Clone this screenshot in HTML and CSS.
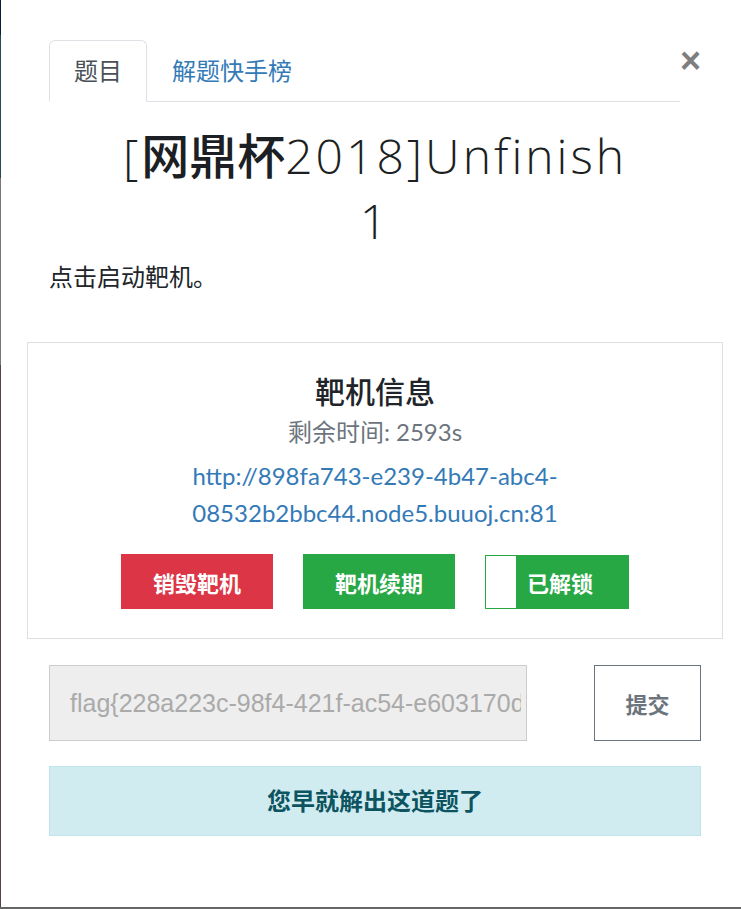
FILE: index.html
```html
<!DOCTYPE html>
<html lang="zh-CN">
<head>
    <meta charset="UTF-8">
    <meta name="viewport" content="width=device-width, initial-scale=1.0">
    <title>[网鼎杯2018]Unfinish 1</title>
    <link rel="stylesheet" href="styles.css">
</head>
<body>
    <div class="modal">
        <div class="modal-head">
            <ul class="tabs">
                <li class="tab active">题目</li>
                <li class="tab"><a href="#">解题快手榜</a></li>
            </ul>
            <button type="button" class="close">&times;</button>
        </div>

        <h1 class="title">[<span class="cjk">网鼎杯</span>2018]Unfinish 1</h1>
        <p class="desc">点击启动靶机。</p>

        <div class="box">
            <h4>靶机信息</h4>
            <p class="timer">剩余时间: 2593s</p>
            <a class="url" href="#">http://898fa743-e239-4b47-abc4-08532b2bbc44.node5.buuoj.cn:81</a>
            <div class="actions">
                <button type="button" class="btn btn-red">销毁靶机</button>
                <button type="button" class="btn btn-green">靶机续期</button>
                <button type="button" class="btn btn-unlock"><span class="knob"></span>已解锁</button>
            </div>
        </div>

        <form class="flag-row" onsubmit="return false">
            <input type="text" class="flag" value="flag{228a223c-98f4-421f-ac54-e603170d7f1b}" readonly>
            <button type="submit" class="submit">提交</button>
        </form>

        <div class="alert">您早就解出这道题了</div>
    </div>
</body>
</html>
```

FILE: styles.css
```css
html, body {
    margin: 0;
    height: 100%;
}
body {
    font-family: Lato, "Noto Sans CJK SC", sans-serif;
    font-size: 24px;
    line-height: 1.5;
    color: #212529;
    background: linear-gradient(to bottom, #0d1b36 0 35px, #24495b 35px 178px, #777 178px 365px, #5c3f4c 365px 907px, #666 907px);
    overflow: hidden;
}
.modal {
    margin-left: 1px;
    height: 907px;
    background-color: #fff;
    padding: 40px 40px 0 48px;
    box-sizing: border-box;
}
.modal-head {
    display: flex;
    align-items: flex-start;
}
.tabs {
    flex: 1;
    display: flex;
    list-style: none;
    margin: 0;
    padding: 0;
    border-bottom: 1px solid #dee2e6;
}
.tab {
    padding: 12px 24px;
    border: 1px solid transparent;
    border-radius: 6px 6px 0 0;
    margin-bottom: -1px;
}
.tab a {
    color: #337ab7;
    text-decoration: none;
}
.tab.active {
    color: #495057;
    border-color: #dee2e6 #dee2e6 #fff;
    background-color: #fff;
}
.close {
    width: 21px;
    padding: 0;
    margin-top: 3px;
    background: none;
    border: none;
    font-family: "Liberation Sans", sans-serif;
    font-size: 36px;
    font-weight: bold;
    line-height: 1;
    color: #000;
    opacity: .5;
    cursor: pointer;
}
.title {
    margin: 21px 0 6px;
    padding: 0 60px;
    text-align: center;
    font-family: "Open Sans", "Noto Sans CJK SC", sans-serif;
    font-size: 48px;
    font-weight: 300;
    letter-spacing: 3px;
    line-height: 65px;
    color: #1c1f23;
}
.title .cjk {
    font-weight: 500;
    letter-spacing: 0;
}
.desc {
    margin: 0;
}
.box {
    margin: 47px -22px 0;
    padding: 26px 20px 29px;
    border: 1px solid #dfdfdf;
    text-align: center;
}
.box h4 {
    margin: 0;
    font-size: 30px;
    font-weight: 500;
    line-height: 45px;
}
.timer {
    margin: 0 0 7px;
    color: #6c757d;
}
.url {
    display: block;
    color: #337ab7;
    text-decoration: none;
    line-height: 37px;
}
.actions {
    display: flex;
    justify-content: center;
    gap: 30px;
    margin-top: 23px;
}
.btn {
    width: 152px;
    height: 55px;
    border: none;
    color: #fff;
    font-family: Lato, "Noto Sans CJK SC", sans-serif;
    font-size: 22px;
    font-weight: bold;
    cursor: pointer;
}
.btn-red {
    background-color: #dc3545;
}
.btn-green {
    background-color: #28a745;
}
.btn-unlock {
    display: flex;
    align-items: center;
    width: 144px;
    height: 54px;
    margin-top: 1px;
    padding: 0;
    border: 1px solid #28a745;
    background-color: #28a745;
}
.knob {
    width: 30px;
    height: 100%;
    margin-right: 11px;
    background-color: #fff;
}
.flag-row {
    display: flex;
    justify-content: space-between;
    margin-top: 26px;
}
.flag {
    width: 478px;
    height: 76px;
    padding: 0 5px 0 20px;
    box-sizing: border-box;
    border: 1px solid #ccc;
    background-color: #eee;
    color: #aaa;
    font-family: "Liberation Sans", sans-serif;
    font-size: 25px;
    outline: none;
}
.submit {
    width: 107px;
    height: 76px;
    border: 1px solid #6c757d;
    background-color: #fff;
    color: #6c757d;
    font-family: Lato, "Noto Sans CJK SC", sans-serif;
    font-size: 22px;
    font-weight: bold;
    cursor: pointer;
}
.alert {
    margin-top: 25px;
    padding: 16px;
    border: 1px solid #bee5eb;
    background-color: #d1ecf1;
    color: #0c5460;
    font-weight: bold;
    text-align: center;
}
```
